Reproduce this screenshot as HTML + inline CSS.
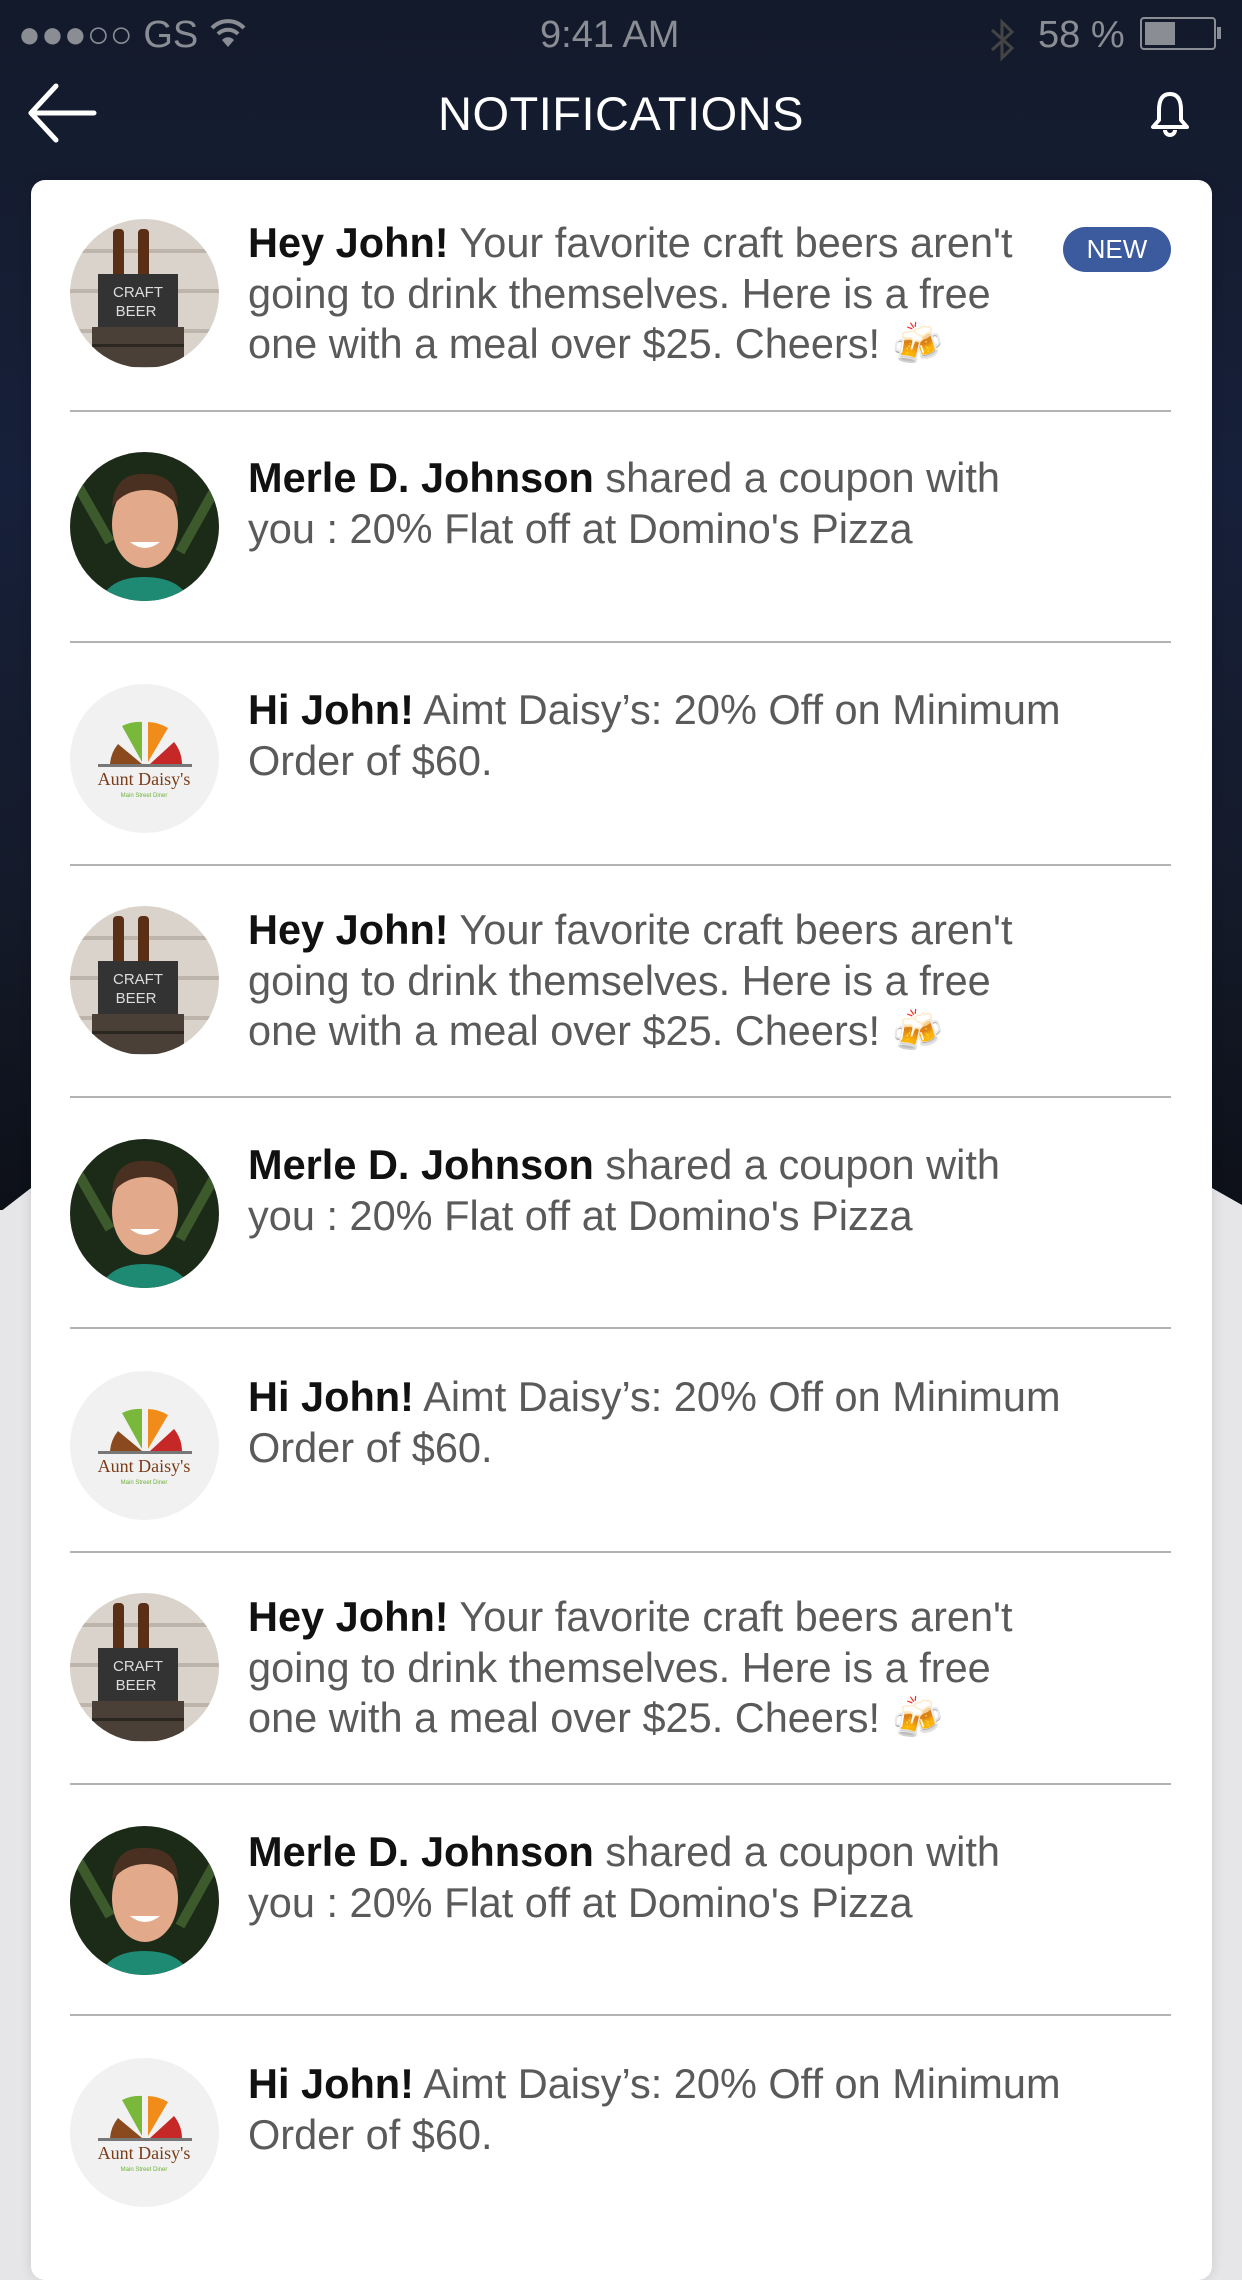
<!DOCTYPE html>
<html><head><meta charset="utf-8"><style>
*{margin:0;padding:0;box-sizing:border-box}
body{width:1242px;height:2208px;overflow:hidden;background:#e6e6e8;font-family:"Liberation Sans",sans-serif;position:relative}
.dark{position:absolute;left:0;top:0;width:1242px;height:1210px;background:linear-gradient(180deg,#131a2b 0%,#17203a 40%,#141a29 75%,#0d1018 100%);clip-path:polygon(0 0,100% 0,100% 1205px,1212px 1188px,31px 1188px,0 1212px)}
.status{position:absolute;top:14px;color:#8a8d94;font-size:38px}
.title{position:absolute;top:86px;left:0;width:1242px;text-align:center;color:#fff;font-size:47px;letter-spacing:0.5px}
.card{position:absolute;left:31px;top:180px;width:1181px;height:2100px;background:#fff;border-radius:14px;box-shadow:0 0 12px rgba(0,0,0,.12)}
.sep{position:absolute;left:70px;width:1101px;height:2px;background:#b3b3b3}
.av{position:absolute;left:70px;width:149px;height:149px;border-radius:50%;overflow:hidden}
.tx{position:absolute;left:248px;font-size:41.5px;line-height:50.5px;color:#5a5a5a;white-space:nowrap;letter-spacing:0}
.tx b{color:#111;font-weight:bold}
.new{position:absolute;left:1063px;top:227px;width:108px;height:45px;border-radius:23px;background:#3c5a9e;color:#fff;font-size:26px;line-height:45px;text-align:center}
</style></head><body>
<div class="dark"></div>
<div class="status" style="left:18px">●●●○○ GS <svg width="38" height="32" viewBox="0 0 38 32" style="vertical-align:-2px"><path d="M3 11 A22 22 0 0 1 35 11" stroke="#8a8d94" stroke-width="4" fill="none"/><path d="M9 17 A14 14 0 0 1 29 17" stroke="#8a8d94" stroke-width="4" fill="none"/><path d="M19 30 L13 23 A8 8 0 0 1 25 23 Z" fill="#8a8d94"/></svg></div>
<div class="status" style="left:540px">9:41 AM</div>
<svg style="position:absolute;left:988px;top:18px" width="30" height="44" viewBox="0 0 30 44"><path d="M4 12 L24 30 L14 40 V4 L24 14 L4 32" stroke="#444" stroke-width="3" fill="none"/></svg>
<div class="status" style="left:1038px">58 %</div>
<div style="position:absolute;left:1140px;top:17px;width:76px;height:33px;border:2px solid #8a8d94;border-radius:4px"><div style="margin:3px;width:30px;height:23px;background:#8a8d94"></div></div>
<div style="position:absolute;left:1217px;top:27px;width:4px;height:12px;background:#8a8d94"></div>
<svg style="position:absolute;left:26px;top:82px" width="72" height="62" viewBox="0 0 72 62"><path d="M68 31 H6 M30 4 L5 31 L30 58" stroke="#fff" stroke-width="5" fill="none" stroke-linecap="round" stroke-linejoin="round"/></svg>
<div class="title">NOTIFICATIONS</div>
<svg style="position:absolute;left:1148px;top:90px" width="44" height="48" viewBox="0 0 44 48"><path d="M22 4 C13 4 11 12 11 20 V30 L5 37 H39 L33 30 V20 C33 12 31 4 22 4 Z" stroke="#fff" stroke-width="4" fill="none" stroke-linejoin="round"/><path d="M17 40 A5 5 0 0 0 27 40" stroke="#fff" stroke-width="4" fill="none"/></svg>
<div class="card"></div>
<div class="new">NEW</div>

<div class="sep" style="top:410px"></div>
<div class="sep" style="top:641px"></div>
<div class="sep" style="top:864px"></div>
<div class="sep" style="top:1096px"></div>
<div class="sep" style="top:1327px"></div>
<div class="sep" style="top:1551px"></div>
<div class="sep" style="top:1783px"></div>
<div class="sep" style="top:2014px"></div>

<div class="av" style="top:219px"><svg width="149" height="149" viewBox="0 0 149 149"><rect width="149" height="149" fill="#d9d3cc"/><rect x="0" y="30" width="149" height="4" fill="#bdb5ab"/><rect x="0" y="70" width="149" height="4" fill="#bdb5ab"/><rect x="0" y="110" width="149" height="4" fill="#bdb5ab"/><rect x="43" y="10" width="11" height="70" rx="4" fill="#5a2f15"/><rect x="68" y="10" width="11" height="70" rx="4" fill="#5a2f15"/><rect x="28" y="55" width="80" height="55" fill="#333"/><text x="68" y="78" font-size="15" fill="#ddd" text-anchor="middle" font-family="Liberation Sans">CRAFT</text><text x="66" y="97" font-size="15" fill="#ddd" text-anchor="middle" font-family="Liberation Sans">BEER</text><rect x="22" y="108" width="92" height="40" fill="#4a4038"/><rect x="22" y="125" width="92" height="3" fill="#2c2620"/></svg></div>
<div class="av" style="top:906px"><svg width="149" height="149" viewBox="0 0 149 149"><rect width="149" height="149" fill="#d9d3cc"/><rect x="0" y="30" width="149" height="4" fill="#bdb5ab"/><rect x="0" y="70" width="149" height="4" fill="#bdb5ab"/><rect x="0" y="110" width="149" height="4" fill="#bdb5ab"/><rect x="43" y="10" width="11" height="70" rx="4" fill="#5a2f15"/><rect x="68" y="10" width="11" height="70" rx="4" fill="#5a2f15"/><rect x="28" y="55" width="80" height="55" fill="#333"/><text x="68" y="78" font-size="15" fill="#ddd" text-anchor="middle" font-family="Liberation Sans">CRAFT</text><text x="66" y="97" font-size="15" fill="#ddd" text-anchor="middle" font-family="Liberation Sans">BEER</text><rect x="22" y="108" width="92" height="40" fill="#4a4038"/><rect x="22" y="125" width="92" height="3" fill="#2c2620"/></svg></div>
<div class="av" style="top:1593px"><svg width="149" height="149" viewBox="0 0 149 149"><rect width="149" height="149" fill="#d9d3cc"/><rect x="0" y="30" width="149" height="4" fill="#bdb5ab"/><rect x="0" y="70" width="149" height="4" fill="#bdb5ab"/><rect x="0" y="110" width="149" height="4" fill="#bdb5ab"/><rect x="43" y="10" width="11" height="70" rx="4" fill="#5a2f15"/><rect x="68" y="10" width="11" height="70" rx="4" fill="#5a2f15"/><rect x="28" y="55" width="80" height="55" fill="#333"/><text x="68" y="78" font-size="15" fill="#ddd" text-anchor="middle" font-family="Liberation Sans">CRAFT</text><text x="66" y="97" font-size="15" fill="#ddd" text-anchor="middle" font-family="Liberation Sans">BEER</text><rect x="22" y="108" width="92" height="40" fill="#4a4038"/><rect x="22" y="125" width="92" height="3" fill="#2c2620"/></svg></div>
<div class="av" style="top:452px"><svg width="149" height="149" viewBox="0 0 149 149"><rect width="149" height="149" fill="#1c2a18"/><path d="M0 20 L40 90 M149 30 L110 100" stroke="#3c5a2c" stroke-width="10"/><path d="M30 149 Q40 125 74 125 Q110 125 120 149 Z" fill="#1e8a74"/><ellipse cx="75" cy="72" rx="33" ry="44" fill="#e2a98a"/><path d="M42 55 Q44 20 76 22 Q108 22 108 55 Q96 38 76 38 Q54 38 42 55 Z" fill="#4a3020"/><path d="M60 90 Q75 102 90 90 Z" fill="#fff"/></svg></div>
<div class="av" style="top:1139px"><svg width="149" height="149" viewBox="0 0 149 149"><rect width="149" height="149" fill="#1c2a18"/><path d="M0 20 L40 90 M149 30 L110 100" stroke="#3c5a2c" stroke-width="10"/><path d="M30 149 Q40 125 74 125 Q110 125 120 149 Z" fill="#1e8a74"/><ellipse cx="75" cy="72" rx="33" ry="44" fill="#e2a98a"/><path d="M42 55 Q44 20 76 22 Q108 22 108 55 Q96 38 76 38 Q54 38 42 55 Z" fill="#4a3020"/><path d="M60 90 Q75 102 90 90 Z" fill="#fff"/></svg></div>
<div class="av" style="top:1826px"><svg width="149" height="149" viewBox="0 0 149 149"><rect width="149" height="149" fill="#1c2a18"/><path d="M0 20 L40 90 M149 30 L110 100" stroke="#3c5a2c" stroke-width="10"/><path d="M30 149 Q40 125 74 125 Q110 125 120 149 Z" fill="#1e8a74"/><ellipse cx="75" cy="72" rx="33" ry="44" fill="#e2a98a"/><path d="M42 55 Q44 20 76 22 Q108 22 108 55 Q96 38 76 38 Q54 38 42 55 Z" fill="#4a3020"/><path d="M60 90 Q75 102 90 90 Z" fill="#fff"/></svg></div>
<div class="av" style="top:684px"><svg width="149" height="149" viewBox="0 0 149 149"><rect width="149" height="149" fill="#f1f1f1"/><path d="M72 78 L52 42 A40 40 0 0 1 72 38 Z" fill="#79b83a"/><path d="M78 78 L78 38 A40 40 0 0 1 98 44 Z" fill="#f08c1a"/><path d="M72 80 L40 80 A36 36 0 0 1 48 60 Z" fill="#8a4a1e"/><path d="M80 80 L104 58 A36 36 0 0 1 112 80 Z" fill="#c62828"/><rect x="28" y="80" width="94" height="3" fill="#777"/><text x="74" y="101" font-size="18" fill="#7a3b17" text-anchor="middle" font-family="Liberation Serif">Aunt Daisy's</text><text x="74" y="113" font-size="6" fill="#6cb33a" text-anchor="middle" font-family="Liberation Sans">Main Street Diner</text></svg></div>
<div class="av" style="top:1371px"><svg width="149" height="149" viewBox="0 0 149 149"><rect width="149" height="149" fill="#f1f1f1"/><path d="M72 78 L52 42 A40 40 0 0 1 72 38 Z" fill="#79b83a"/><path d="M78 78 L78 38 A40 40 0 0 1 98 44 Z" fill="#f08c1a"/><path d="M72 80 L40 80 A36 36 0 0 1 48 60 Z" fill="#8a4a1e"/><path d="M80 80 L104 58 A36 36 0 0 1 112 80 Z" fill="#c62828"/><rect x="28" y="80" width="94" height="3" fill="#777"/><text x="74" y="101" font-size="18" fill="#7a3b17" text-anchor="middle" font-family="Liberation Serif">Aunt Daisy's</text><text x="74" y="113" font-size="6" fill="#6cb33a" text-anchor="middle" font-family="Liberation Sans">Main Street Diner</text></svg></div>
<div class="av" style="top:2058px"><svg width="149" height="149" viewBox="0 0 149 149"><rect width="149" height="149" fill="#f1f1f1"/><path d="M72 78 L52 42 A40 40 0 0 1 72 38 Z" fill="#79b83a"/><path d="M78 78 L78 38 A40 40 0 0 1 98 44 Z" fill="#f08c1a"/><path d="M72 80 L40 80 A36 36 0 0 1 48 60 Z" fill="#8a4a1e"/><path d="M80 80 L104 58 A36 36 0 0 1 112 80 Z" fill="#c62828"/><rect x="28" y="80" width="94" height="3" fill="#777"/><text x="74" y="101" font-size="18" fill="#7a3b17" text-anchor="middle" font-family="Liberation Serif">Aunt Daisy's</text><text x="74" y="113" font-size="6" fill="#6cb33a" text-anchor="middle" font-family="Liberation Sans">Main Street Diner</text></svg></div>

<div class="tx" style="top:218px"><b>Hey John!</b> Your favorite craft beers aren't<br>going to drink themselves. Here is a free<br>one with a meal over $25. Cheers! 🍻</div>
<div class="tx" style="top:453px"><b>Merle D. Johnson</b> shared a coupon with<br>you : 20% Flat off at Domino's Pizza</div>
<div class="tx" style="top:685px"><b>Hi John!</b> Aimt Daisy’s: 20% Off on Minimum<br>Order of $60.</div>
<div class="tx" style="top:905px"><b>Hey John!</b> Your favorite craft beers aren't<br>going to drink themselves. Here is a free<br>one with a meal over $25. Cheers! 🍻</div>
<div class="tx" style="top:1140px"><b>Merle D. Johnson</b> shared a coupon with<br>you : 20% Flat off at Domino's Pizza</div>
<div class="tx" style="top:1372px"><b>Hi John!</b> Aimt Daisy’s: 20% Off on Minimum<br>Order of $60.</div>
<div class="tx" style="top:1592px"><b>Hey John!</b> Your favorite craft beers aren't<br>going to drink themselves. Here is a free<br>one with a meal over $25. Cheers! 🍻</div>
<div class="tx" style="top:1827px"><b>Merle D. Johnson</b> shared a coupon with<br>you : 20% Flat off at Domino's Pizza</div>
<div class="tx" style="top:2059px"><b>Hi John!</b> Aimt Daisy’s: 20% Off on Minimum<br>Order of $60.</div>
</body></html>
